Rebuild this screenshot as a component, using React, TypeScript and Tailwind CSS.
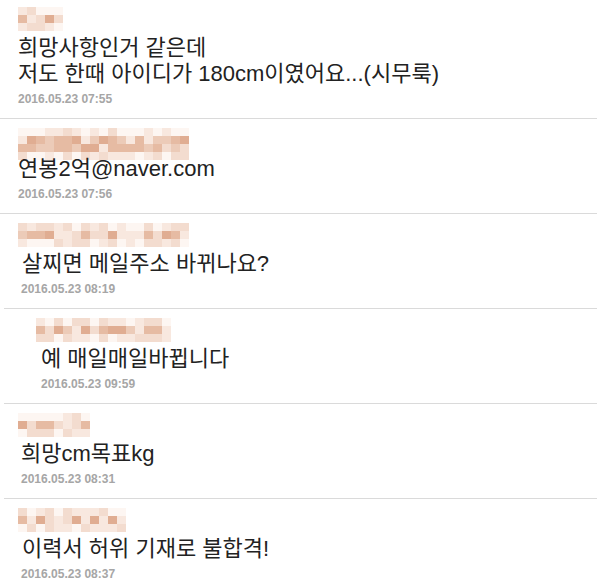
import React from 'react';

const palette = ['#fdf6f2', '#f8e8df', '#f3dccf', '#eccbb8', '#e6bba3', '#e0ad92', '#fbefe9'];

function Mosaic({ cols, rows, seed }: { cols: number; rows: number; seed: number }) {
  // pseudo random so the blur pattern stays the same every render
  let s = seed;
  const rnd = () => {
    s = (s * 9301 + 49297) % 233280;
    return s / 233280;
  };
  const cells: React.ReactNode[] = [];
  for (let r = 0; r < rows; r++) {
    for (let c = 0; c < cols; c++) {
      const edge = r === 0 || r === rows - 1;
      const idx = edge ? Math.floor(rnd() * 3) : 1 + Math.floor(rnd() * 5);
      cells.push(<rect key={`${r}-${c}`} x={c * 9} y={r * 8} width={9} height={8} fill={palette[idx]} />);
    }
  }
  return (
    <svg width={cols * 9} height={rows * 8} className="block">
      {cells}
    </svg>
  );
}

type Comment = {
  cols: number;
  rows: number;
  seed: number;
  lines: string[];
  date: string;
  nameX: string;
  textX: string;
  dateX: string;
};

const top: Comment[] = [
  { cols: 5, rows: 3, seed: 11, lines: ['희망사항인거 같은데', '저도 한때 아이디가 180cm이였어요...(시무룩)'], date: '2016.05.23 07:55', nameX: 'pl-[18px]', textX: 'pl-[18px]', dateX: 'pl-[18px]' },
  { cols: 19, rows: 4, seed: 27, lines: ['연봉2억@naver.com'], date: '2016.05.23 07:56', nameX: 'pl-[18px]', textX: 'pl-[18px]', dateX: 'pl-[18px]' },
];

const rest: Comment[] = [
  { cols: 19, rows: 3, seed: 43, lines: ['살찌면 메일주소 바뀌나요?'], date: '2016.05.23 08:19', nameX: 'pl-[14px]', textX: 'pl-[18px]', dateX: 'pl-[17px]' },
  { cols: 15, rows: 3, seed: 58, lines: ['예 매일매일바뀝니다'], date: '2016.05.23 09:59', nameX: 'pl-[32px]', textX: 'pl-[37px]', dateX: 'pl-[37px]' },
  { cols: 8, rows: 3, seed: 71, lines: ['희망cm목표kg'], date: '2016.05.23 08:31', nameX: 'pl-[14px]', textX: 'pl-[17px]', dateX: 'pl-[17px]' },
  { cols: 12, rows: 3, seed: 89, lines: ['이력서 허위 기재로 불합격!'], date: '2016.05.23 08:37', nameX: 'pl-[14px]', textX: 'pl-[18px]', dateX: 'pl-[17px]' },
];

function CommentItem({ c }: { c: Comment }) {
  return (
    <div className="pt-[9px] pb-[11px] border-b border-[#dadada]">
      <div className={`h-[28px] ${c.nameX}`}>
        <Mosaic cols={c.cols} rows={c.rows} seed={c.seed} />
      </div>
      <div className={`text-[22px] leading-[26px] text-[#222] ${c.textX}`}>
        {c.lines.map((l) => (
          <div key={l} className="whitespace-nowrap">{l}</div>
        ))}
      </div>
      <div className={`mt-[4px] text-[12px] leading-[16px] font-bold text-[#a6a6a6] ${c.dateX}`}>{c.date}</div>
    </div>
  );
}

export default function App() {
  return (
    <div
      className="w-[597px] h-[583px] overflow-hidden bg-white"
      style={{ fontFamily: '"Liberation Sans", "Noto Sans CJK KR", sans-serif' }}
    >
      <div className="-mt-[2px]">
        {top.map((c) => (
          <CommentItem key={c.date} c={c} />
        ))}
        <div className="pl-[4px]">
          {rest.map((c) => (
            <CommentItem key={c.date} c={c} />
          ))}
        </div>
      </div>
    </div>
  );
}
